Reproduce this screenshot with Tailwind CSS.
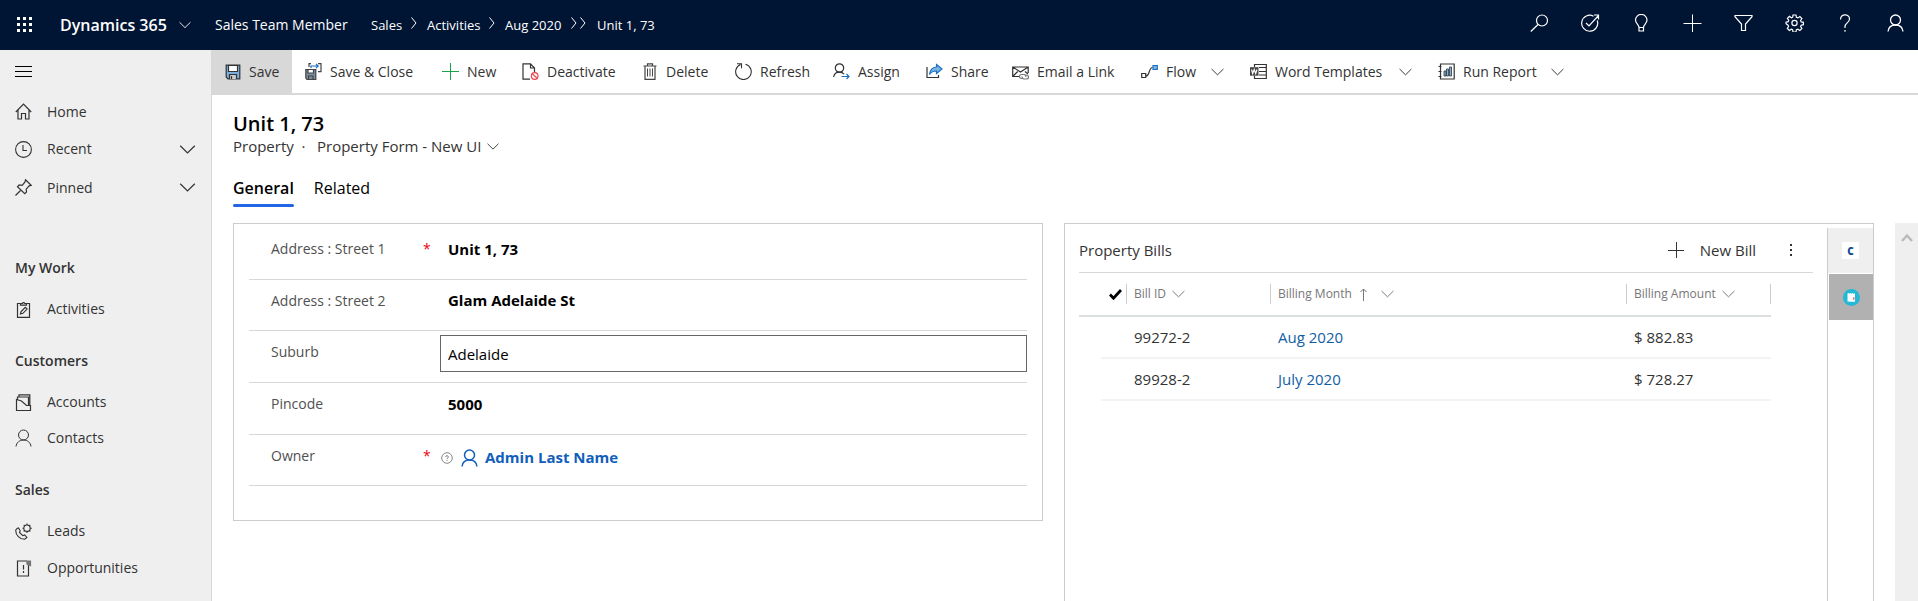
<!DOCTYPE html>
<html lang="en">
<head>
    <meta charset="UTF-8">
    <meta name="viewport" content="width=device-width, initial-scale=1.0">
    <title>Unit 1, 73 - Dynamics 365</title>
    <script src="https://cdn.jsdelivr.net/npm/@tailwindcss/browser@4"></script>
</head>
<body class="flex flex-col h-screen overflow-hidden bg-white text-[15px] leading-5 text-[#333] font-['Segoe_UI','Open_Sans',sans-serif]">
    <!-- Shared icons -->
    <svg class="hidden">
        <symbol id="chevron" viewBox="0 0 16 9" fill="none" stroke="currentColor" stroke-width="1.200"><path d="M.7.8 8 8 15.300 .8"/></symbol>
        <symbol id="crumb" viewBox="0 0 6 12" fill="none" stroke="currentColor"><path d="M.5.5 5 6 .5 11.500"/></symbol>
        <symbol id="person" viewBox="0 0 17 18" fill="none" stroke="currentColor"><circle cx="8.500" cy="6" r="5"/><path d="M1 17.500C1.500 13.500 4.500 11 8.500 11s7 2.500 7.500 6.500"/></symbol>
    </svg>

    <!-- Top bar -->
    <header class="flex items-center shrink-0 h-[50px] bg-[#001433] text-white pl-4 pr-[14px]">
        <button class="mr-[26px]" aria-label="App launcher">
            <svg class="w-[18px] h-[18px]" viewBox="0 0 18 18" fill="currentColor"><path d="M1 1h3v3H1zM7 1h3v3H7zM13 1h3v3h-3zM1 7h3v3H1zM7 7h3v3H7zM13 7h3v3h-3zM1 13h3v3H1zM7 13h3v3H7zM13 13h3v3h-3z"/></svg>
        </button>
        <button class="flex items-center justify-between w-[131px] text-base font-semibold whitespace-nowrap">Dynamics 365
            <svg class="w-3 h-2 shrink-0"><use href="#chevron"/></svg>
        </button>
        <a href="#" class="ml-6 w-[156px] text-sm whitespace-nowrap">Sales Team Member</a>
        <nav class="flex items-center text-[13px] whitespace-nowrap">
            <a href="#" class="w-10">Sales</a>
            <svg class="w-[6px] h-3 mb-1 mr-[10px]"><use href="#crumb"/></svg>
            <a href="#" class="w-[62px]">Activities</a>
            <svg class="w-[6px] h-3 mb-1 mr-[10px]"><use href="#crumb"/></svg>
            <a href="#" class="w-[66px]">Aug 2020</a>
            <svg class="w-[6px] h-3 mb-1 mr-[3px]"><use href="#crumb"/></svg>
            <svg class="w-[6px] h-3 mb-1 mr-[11px]"><use href="#crumb"/></svg>
            <a href="#">Unit 1, 73</a>
        </nav>
        <div class="flex items-center gap-8 ml-auto mb-1">
            <button aria-label="Search"><svg class="w-[19px] h-[18px]" viewBox="0 0 19 18" fill="none" stroke="currentColor" stroke-width="1.200"><circle cx="12" cy="6.500" r="5.500"/><path d="M8 10.500.8 17.500"/></svg></button>
            <button aria-label="Tasks"><svg class="w-[19px] h-[18px]" viewBox="0 0 19 18" fill="none" stroke="currentColor" stroke-width="1.200"><path d="M12.500 2.200a8 8 0 1 0 3.700 4.300M5 9l3 3L17.500 1.500M13 1h4.500v4.500"/></svg></button>
            <button aria-label="Insights"><svg class="w-[19px] h-[18px]" viewBox="0 0 19 18" fill="none" stroke="currentColor" stroke-width="1.200"><path d="M7 13.500c0-3-3.500-4-3.500-7.500a5.700 5.500 0 0 1 11.500 0c0 3.500-3.500 4.500-3.500 7.500zM7 13.500v3.500h4.500v-3.500"/></svg></button>
            <button aria-label="Create"><svg class="w-[19px] h-[18px]" viewBox="0 0 19 18" fill="none" stroke="currentColor"><path d="M.5 9.500h18M9.500.500v18"/></svg></button>
            <button aria-label="Filter"><svg class="w-[19px] h-[18px]" viewBox="0 0 19 18" fill="none" stroke="currentColor" stroke-width="1.200"><path d="M1 1.500h17v1.200L11.500 10v6.500h-4V10L1 2.700z"/></svg></button>
            <button aria-label="Settings"><svg class="w-[19px] h-[18px]" viewBox="0 0 19 18" fill="none" stroke="currentColor" stroke-width="1.200"><path d="M8 1h3l.4 2.300 1.500.6 2-1.400 2 2-1.300 2 .6 1.400 2.200.4v2.400l-2.200.5-.6 1.300 1.300 2-2 2-2-1.300-1.500.5-.4 2.300H8l-.4-2.300-1.300-.5-2 1.300-2-2 1.300-2-.5-1.300L1 9.800V8.200l2.200-.5.500-1.300-1.300-2 2-2 2 1.400 1.300-.6z"/><circle cx="9.500" cy="9" r="2.600"/></svg></button>
            <button aria-label="Help"><svg class="w-[19px] h-[18px]" viewBox="0 0 19 18" fill="none" stroke="currentColor" stroke-width="1.200"><path d="M4.500 5.500c0-3 2-4.700 4.500-4.700s4.500 1.700 4.500 4.200c0 3.700-4.500 4-4.500 7.500v1.500M9 16v1.700"/></svg></button>
            <button aria-label="Account"><svg class="w-[17px] h-[18px] stroke-[1.300]"><use href="#person"/></svg></button>
        </div>
    </header>

    <div class="flex flex-1 min-h-0">
        <!-- Site map -->
        <aside class="w-[212px] shrink-0 bg-[#efefef] border-r border-[#d8d8d8] text-sm">
            <button class="flex items-center h-[43px] pl-[15px] text-black" aria-label="Toggle menu">
                <svg class="w-[17px] h-[11px]" viewBox="0 0 17 11" stroke="currentColor"><path d="M0 .5h17M0 5.500h17M0 10.500h17"/></svg>
            </button>
            <nav>
                <a href="#" class="flex items-center gap-[15px] h-[37px] px-[15px]">
                    <svg class="w-[17px] h-[17px]" viewBox="0 0 17 17" fill="none" stroke="currentColor" stroke-width="1.200"><path d="M.8 9 8.500 1.200 16.200 9M3 7.300V16h3.500v-5.500h4V16H14V7.300"/></svg>Home
                </a>
                <button class="flex items-center gap-[15px] w-full h-[38px] px-[15px]">
                    <svg class="w-[17px] h-[17px]" viewBox="0 0 17 17" fill="none" stroke="currentColor" stroke-width="1.100"><circle cx="8.500" cy="8.500" r="7.900"/><path d="M8 4v5.500h4"/></svg>Recent
                    <svg class="w-[17px] h-[9px] ml-auto"><use href="#chevron"/></svg>
                </button>
                <button class="flex items-center gap-[15px] w-full h-[39px] px-[15px]">
                    <svg class="w-[17px] h-[17px]" viewBox="0 0 17 17" fill="none" stroke="currentColor" stroke-width="1.200"><path d="M.5 16.500 6 11M10.500.8l5.700 5.500-2 .6-3 3.200.3 3-1.700 1.600-7.300-7L4.200 6l3 .3L10 3z"/></svg>Pinned
                    <svg class="w-[17px] h-[9px] ml-auto"><use href="#chevron"/></svg>
                </button>
                <h2 class="mt-[51px] px-[15px] font-semibold">My Work</h2>
                <a href="#" class="flex items-center gap-[15px] h-[36px] mt-[13px] px-[15px]">
                    <svg class="w-[17px] h-[17px]" viewBox="0 0 17 17" fill="none" stroke="currentColor" stroke-width="1.200"><path d="M5.500 2.500h-3v13.800h12V2.500h-3M5.500 4.200V2.500h1.700a1.400 1.400 0 0 1 2.600 0h1.700v1.700zM5.500 13l.6-2.500 4.200-4.200 1.800 1.800-4.200 4.200z"/></svg>Activities
                </a>
                <h2 class="mt-6 px-[15px] font-semibold">Customers</h2>
                <a href="#" class="flex items-center gap-[15px] h-[36px] mt-[13px] px-[15px]">
                    <svg class="w-[17px] h-[17px]" viewBox="0 0 17 17" fill="none" stroke="currentColor" stroke-width="1.200"><path d="M1.500 5.500 6.500 7l5 4.500h4v5h-14zM2.500 5.500V3h11v8.500M4 3V.8h10.800v10.700"/></svg>Accounts
                </a>
                <a href="#" class="flex items-center gap-[15px] h-[36px] px-[15px]">
                    <svg class="w-[17px] h-[18px]"><use href="#person"/></svg>Contacts
                </a>
                <h2 class="mt-6 px-[15px] font-semibold">Sales</h2>
                <a href="#" class="flex items-center gap-[15px] h-[36px] mt-[13px] px-[15px]">
                    <svg class="w-[17px] h-[17px]" viewBox="0 0 17 17" fill="none" stroke="currentColor" stroke-width="1.100"><path d="M2 5.500.7 7.200c0 5 4 9 9 9.100l2.200-1.800-2.200-2.600-1.900.8L4.500 9.500l.7-1.800L3.500 5zM12 .5v1.700M12 8.300V10M7.500 5.200h1.600M14.900 5.200h1.900M8.700 2l1.300 1.200M14 7.200l1.300 1.300M15.300 2 14 3.200M8.700 8.500 10 7.200"/><circle cx="12" cy="5.200" r="3.200"/></svg>Leads
                </a>
                <a href="#" class="flex items-center gap-[15px] h-[38px] px-[15px]">
                    <svg class="w-[17px] h-[17px]" viewBox="0 0 17 17" fill="none" stroke="currentColor" stroke-width="1.200"><path d="M12 1H2.500v15h11V5M8.500 5v4.500M8.500 11v2"/><path d="M12 1h3.500v4.500L12 4z" fill="#777" stroke="#777"/></svg>Opportunities
                </a>
            </nav>
        </aside>

        <main class="flex flex-col flex-1 min-w-0">
            <!-- Command bar -->
            <div class="flex shrink-0 h-[45px] border-b-2 border-[#d8d8d8] text-sm whitespace-nowrap">
                <button class="flex items-center gap-2 w-20 pl-[13px] bg-[#d8d8d8]">
                    <svg class="w-4 h-4" viewBox="0 0 16 16" fill="none" stroke="#333" stroke-width="1.200"><path d="M1.200 1.200h13.600v13.600H3L1.200 13z" fill="#7aaede"/><path d="M3.500 1.500h9v6h-9z" fill="#fff"/><path d="M4.500 15v-4.500h7V15M6.500 12v3" fill="#ccc"/></svg>Save
                </button>
                <button class="flex items-center gap-2 w-[137px] pl-[13px]">
                    <svg class="w-[17px] h-[17px]" viewBox="0 0 17 17" fill="none" stroke="#444" stroke-width="1.200"><path d="M.8 6.500h10v10H2L.8 15z" fill="#7b8ea0"/><path d="M3 6.500h5.500V10H3z" fill="#fff"/><path d="M3.500 16.500V13H8v3.500M4 4V.7h2M13 .7h3v8h-3"/><path d="M6 5V3h7M11 .8 13.200 3 11 5.200" stroke="#1b6ec2"/></svg>Save &amp; Close
                </button>
                <button class="flex items-center gap-2 w-20 pl-[13px]">
                    <svg class="w-[17px] h-[17px]" viewBox="0 0 17 17" stroke="#16a34a"><path d="M0 8.500h17M8.500 0v17"/></svg>New
                </button>
                <button class="flex items-center gap-2 w-[120px] pl-[13px]">
                    <svg class="w-[17px] h-[17px]" viewBox="0 0 17 17" fill="none" stroke="#333" stroke-width="1.200"><path d="M8 16.200H1V.8h7.500L12.500 5v4M8.500.8V5h4"/><g stroke="#e5484d"><circle cx="12.700" cy="13" r="3.300"/><path d="m10.500 11 4.400 4"/></g></svg>Deactivate
                </button>
                <button class="flex items-center gap-2 w-[93px] pl-[13px]">
                    <svg class="w-4 h-[17px]" viewBox="0 0 16 17" fill="none" stroke="#444" stroke-width="1.200"><path d="M1.500 3h13M5.500 3V.8h5V3M3 3v13.300h10V3"/><path d="M5.500 5.500v8M8 5.500v8M10.500 5.500v8" stroke-width="1"/></svg>Delete
                </button>
                <button class="flex items-center gap-2 w-[98px] pl-[13px]">
                    <svg class="w-[17px] h-[17px]" viewBox="0 0 17 17" fill="none" stroke="#333" stroke-width="1.100"><path d="M10.500 1.200a7.800 7.800 0 1 1-5 .3M2 .8h4.500v4.500"/></svg>Refresh
                </button>
                <button class="flex items-center gap-2 w-[93px] pl-[13px]">
                    <svg class="w-[17px] h-[17px]" viewBox="0 0 17 17" fill="none" stroke="#333" stroke-width="1.200"><circle cx="6.500" cy="5" r="4.200"/><path d="M.6 14c.6-3 3-4.800 5.900-4.800 2 0 3.500.8 4.500 2"/><path d="M8.500 13.500H16M13.500 11l2.500 2.500-2.500 2.500" stroke="#1b6ec2"/></svg>Assign
                </button>
                <button class="flex items-center gap-2 w-[86px] pl-[13px]">
                    <svg class="w-[17px] h-[17px]" viewBox="0 0 17 17" fill="none" stroke="#333" stroke-width="1.200"><path d="M1 4v10.500h11.500V12"/><path d="M10.500 1.500 16 6l-5.500 4.500V8C7 8 5 9 3.500 11.500 4 7 6.500 4.300 10.500 4z" fill="#7db4e6" stroke="#1b6ec2"/></svg>Share
                </button>
                <button class="flex items-center gap-2 w-[129px] pl-[13px]">
                    <svg class="w-[17px] h-[17px]" viewBox="0 0 17 17" fill="none" stroke="#333" stroke-width="1.200"><path d="M7 13.500H.7V4h15.500v6M.7 4l7.800 5 7.700-5M.7 13.500l5-5M16 11l-3-2.500"/><path d="M11 15.500H9.500a2 2 0 0 1 0-4H12a2 2 0 0 1 1.800 2.500M13 12h1.500a2 2 0 0 1 0 4H12a2 2 0 0 1-1.800-2.500" stroke="#777"/></svg>Email a Link
                </button>
                <button class="flex items-center gap-2 w-[109px] pl-[13px]">
                    <svg class="w-[17px] h-[17px]" viewBox="0 0 17 17" fill="none" stroke="#333" stroke-width="1.200"><path d="M.7 10.500h4v4h-4zM5 13c4 0 2.500-8.500 6.500-8.500"/><path d="M12 2.500h4.300v4H12z" fill="#7db4e6" stroke="#1b6ec2"/></svg>Flow
                    <svg class="w-[13px] h-2 ml-auto mr-[13px]"><use href="#chevron"/></svg>
                </button>
                <button class="flex items-center gap-2 w-[188px] pl-[13px]">
                    <svg class="w-[17px] h-[17px]" viewBox="0 0 17 17" fill="none" stroke="#333" stroke-width="1.200"><path d="M4.500 4V1.500h11.800v14H4.500V13M9 4.500h7M9 8.500h7M9 12h7"/><path d="M0 4.200h8.500v8.500H0z" fill="#444" stroke="none"/><path d="m1.500 6.500 1.200 4 1.500-4 1.500 4 1.300-4" stroke="#fff"/></svg>Word Templates
                    <svg class="w-[13px] h-2 ml-auto mr-[13px]"><use href="#chevron"/></svg>
                </button>
                <button class="flex items-center gap-2 w-[152px] pl-[13px]">
                    <svg class="w-[17px] h-[17px]" viewBox="0 0 17 17" fill="none" stroke="#333" stroke-width="1.200"><path d="M2.500 1h13.700v15H2.500zM.5 3.500h3M.5 8.500h3M.5 13.500h3"/><path d="M6 8h2v5H6zM8.500 6h2v7h-2zM11.500 4h2v9h-2z" fill="#7db4e6" stroke-width=".8"/></svg>Run Report
                    <svg class="w-[13px] h-2 ml-auto mr-[13px]"><use href="#chevron"/></svg>
                </button>
            </div>

            <!-- Record title -->
            <div class="pl-[21px] pt-[15px]">
                <h1 class="text-xl leading-7 font-semibold text-black">Unit 1, 73</h1>
                <div class="flex items-center leading-4">
                    <span class="w-[84px]">Property &nbsp;·</span>
                    <button class="flex items-center gap-[6px]">Property Form - New UI
                        <svg class="w-3 h-[7px]"><use href="#chevron"/></svg>
                    </button>
                </div>
                <div class="flex gap-5 mt-[22px] text-base leading-6 text-black" role="tablist">
                    <button role="tab" class="font-semibold">General<span class="block h-[3px] mt-1 rounded bg-[#2266e3]"></span></button>
                    <button role="tab" class="self-start">Related</button>
                </div>
            </div>

            <div class="flex flex-1 min-h-0 mt-4 pl-[21px]">
                <div class="grid grid-cols-2 gap-[21px] flex-1 min-w-0">
                    <!-- Property details -->
                    <form class="self-start border border-[#ccc] pt-1 px-[15px] pb-[34px] text-[#505050] text-sm">
                        <div class="flex h-[52px] border-b border-[#d8d8d8]">
                            <label for="street1" class="w-[152px] ml-[22px] pt-[11px]">Address : Street 1</label>
                            <span class="w-[17px] pt-[11px] text-red-600">*</span>
                            <input id="street1" value="Unit 1, 73" class="flex-1 min-w-0 px-2 pb-2 text-[15px] font-bold text-black">
                        </div>
                        <div class="flex h-[51px] border-b border-[#d8d8d8]">
                            <label for="street2" class="w-[169px] ml-[22px] pt-[11px]">Address : Street 2</label>
                            <input id="street2" value="Glam Adelaide St" class="flex-1 min-w-0 px-2 pb-2 text-[15px] font-bold text-black">
                        </div>
                        <div class="flex h-[52px] border-b border-[#d8d8d8]">
                            <label for="suburb" class="w-[169px] ml-[22px] pt-[11px]">Suburb</label>
                            <input id="suburb" value="Adelaide" class="flex-1 min-w-0 h-[37px] mt-1 px-[7px] border border-[#666] text-[15px] text-black">
                        </div>
                        <div class="flex h-[52px] border-b border-[#d8d8d8]">
                            <label for="pincode" class="w-[169px] ml-[22px] pt-[11px]">Pincode</label>
                            <input id="pincode" value="5000" class="flex-1 min-w-0 px-2 pb-2 text-[15px] font-bold text-black">
                        </div>
                        <div class="flex h-[51px] border-b border-[#d8d8d8]">
                            <span class="w-[152px] ml-[22px] pt-[11px]">Owner</span>
                            <span class="w-[17px] pt-[11px] text-red-600">*</span>
                            <a href="#" class="flex items-center pb-1 text-[15px] font-bold text-[#115ebb]">
                                <svg class="w-3 h-3 ml-[1px] mr-2" viewBox="0 0 12 12" fill="none" stroke="#888"><circle cx="6" cy="6" r="5.300"/><path d="M4.700 5c0-1.800 2.700-1.800 2.700 0C7.400 6 6 6 6 7.200M6 8v1"/></svg>
                                <svg class="w-[17px] h-[18px] mr-[7px] stroke-[1.5]"><use href="#person"/></svg>Admin Last Name
                            </a>
                        </div>
                    </form>

                    <!-- Property bills -->
                    <section class="flex border border-b-0 border-[#ccc]">
                        <div class="flex-1 px-[14px]">
                            <div class="flex items-center h-[49px] pt-1 border-b border-[#d8d8d8]">
                                <h2 class="mr-auto font-medium">Property Bills</h2>
                                <button class="flex items-center gap-4 mr-[34px]">
                                    <svg class="w-4 h-4" viewBox="0 0 16 16" stroke="currentColor"><path d="M0 8.500h16M8.500 0v16"/></svg>New Bill
                                </button>
                                <button class="mr-5" aria-label="More commands"><svg class="w-[3px] h-[13px]" viewBox="0 0 3 13" fill="currentColor"><path d="M0 0h2v2H0zM0 5h2v2H0zM0 10h2v2H0z"/></svg></button>
                            </div>
                            <div class="pr-[42px]">
                                <table class="w-full table-fixed text-left">
                                    <thead class="text-xs text-[#777]">
                                        <tr class="h-[43px] border-b-2 border-[#dcdfdf]">
                                            <th class="w-[22px]"></th>
                                            <th class="w-[25px]"><svg class="w-[13px] h-[11px] ml-2" viewBox="0 0 13 11" fill="none" stroke="#000" stroke-width="2.800"><path d="m1 5.500 3.500 3.700L12 1"/></svg></th>
                                            <th class="w-[144px] font-normal"><span class="flex items-center gap-[6px] h-5 pl-[7px] border-l border-[#ccc]">Bill ID<svg class="w-[13px] h-2"><use href="#chevron"/></svg></span></th>
                                            <th class="font-normal"><span class="flex items-center h-5 pl-[7px] border-l border-[#ccc]">Billing Month<svg class="w-[7px] h-[13px] ml-2 mr-[14px]" viewBox="0 0 7 13" fill="none" stroke="currentColor"><path d="M3.500 13V1M.5 4l3-3 3 3"/></svg><svg class="w-[13px] h-2"><use href="#chevron"/></svg></span></th>
                                            <th class="w-[145px] font-normal"><span class="flex items-center gap-[6px] h-5 pl-[7px] border-x border-[#ccc] whitespace-nowrap">Billing Amount<svg class="w-[13px] h-2"><use href="#chevron"/></svg></span></th>
                                        </tr>
                                    </thead>
                                    <tbody>
                                        <tr class="h-[42px]">
                                            <td></td>
                                            <td class="border-b-2 border-[#f3f3f3]"></td>
                                            <td class="pl-2 border-b-2 border-[#f3f3f3]">99272-2</td>
                                            <td class="pl-2 border-b-2 border-[#f3f3f3]"><a href="#" class="text-[#115ea3]">Aug 2020</a></td>
                                            <td class="pl-2 border-b-2 border-[#f3f3f3]">$ 882.83</td>
                                        </tr>
                                        <tr class="h-[42px]">
                                            <td></td>
                                            <td class="border-b-2 border-[#f3f3f3]"></td>
                                            <td class="pl-2 border-b-2 border-[#f3f3f3]">89928-2</td>
                                            <td class="pl-2 border-b-2 border-[#f3f3f3]"><a href="#" class="text-[#115ea3]">July 2020</a></td>
                                            <td class="pl-2 border-b-2 border-[#f3f3f3]">$ 728.27</td>
                                        </tr>
                                    </tbody>
                                </table>
                            </div>
                        </div>
                        <!-- Side panes -->
                        <div class="w-[46px] mt-1 border-l border-[#ccc]">
                            <button class="flex items-center justify-center w-full h-[45px] bg-[#efefef]">
                                <span class="flex items-center justify-center w-[17px] h-[17px] bg-white font-extrabold text-[10px] text-[#0b4a8f]">C</span>
                            </button>
                            <button class="flex items-center justify-center w-full h-[48px] bg-[#b1b1b1] border border-r-0 border-white" aria-label="Bills pane">
                                <svg class="w-[17px] h-[17px]" viewBox="0 0 17 17"><circle cx="8.500" cy="8.500" r="8.500" fill="#22b8d6"/><path d="M4.500 4.500 5.500 4l1 .7L7.500 4l1 .7 1-.7 1 .7 1.500-.2v8l-1 .5-1-.6-1 .6-1-.6-1 .6-1-.6-1.500.2z" fill="#fff"/><path d="M10 8h1.500v3H10z" fill="#f08080"/></svg>
                            </button>
                        </div>
                    </section>
                </div>

                <!-- Scroll track -->
                <div class="w-[23px] ml-[21px] pt-[10px] bg-[#efefef]">
                    <svg class="w-3 h-[9px] mx-auto" viewBox="0 0 12 9" fill="none" stroke="#bbb" stroke-width="2.500"><path d="m1 8 5-5.500L11 8"/></svg>
                </div>
            </div>
        </main>
    </div>
</body>
</html>
